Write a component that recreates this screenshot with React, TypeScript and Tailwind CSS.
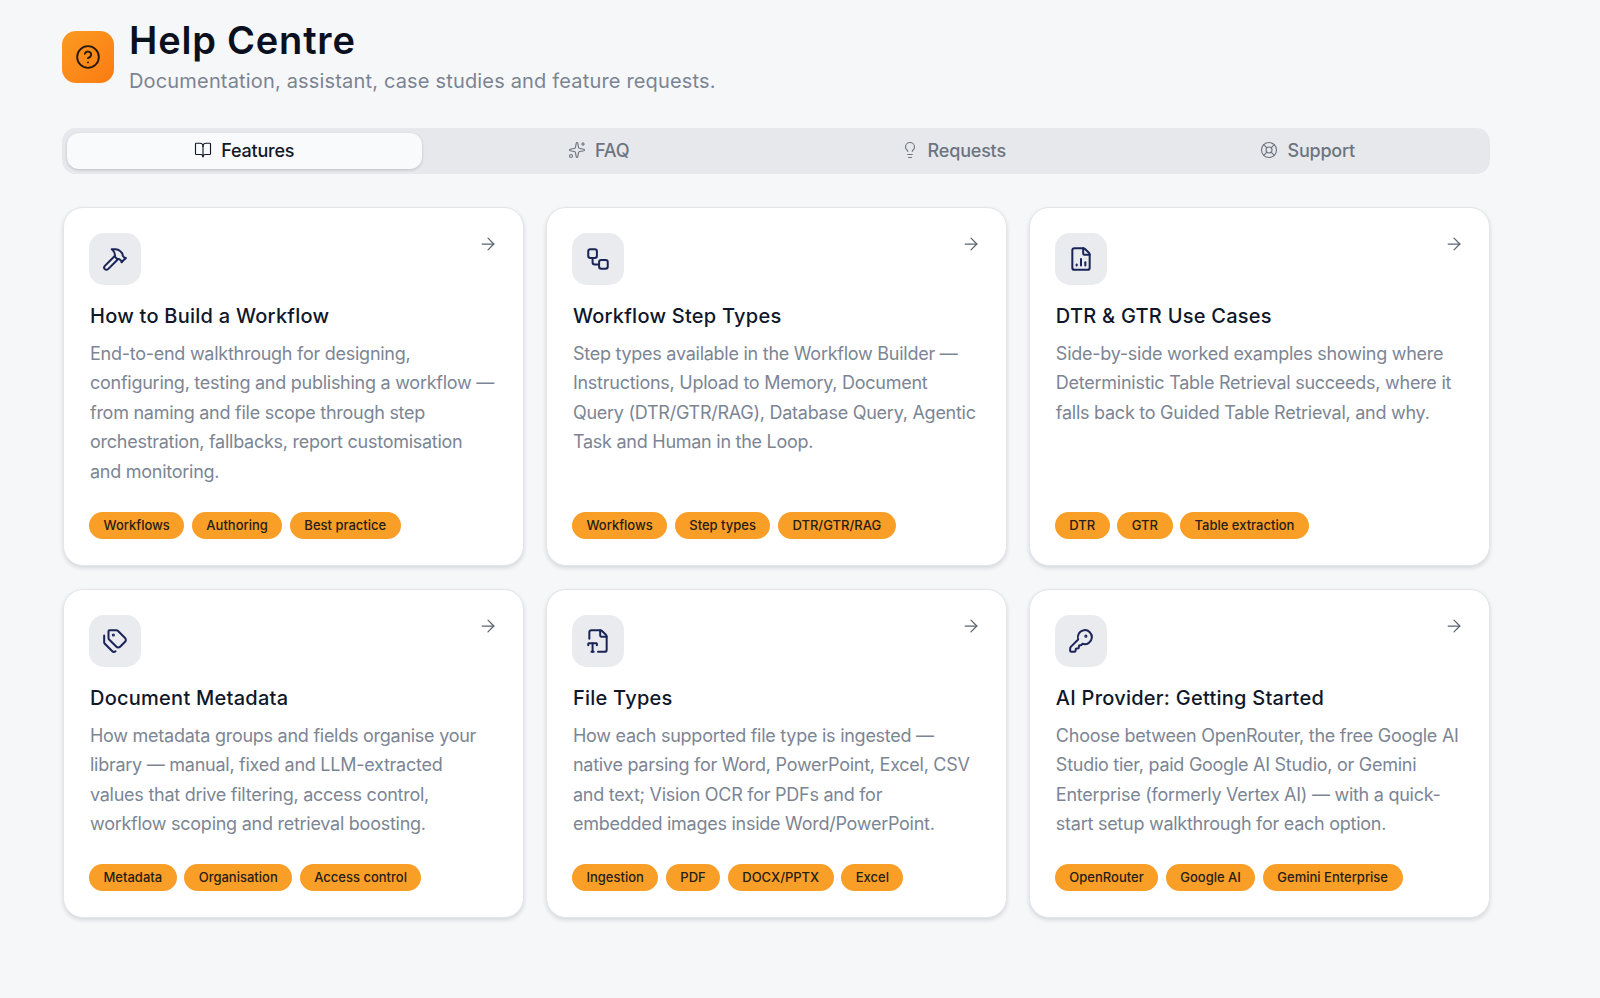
import { ArrowRight, BookOpen, CircleHelp, FileChartColumn, FileTypeCorner, Hammer, KeyRound, LifeBuoy, Lightbulb, Sparkles, Tags, Workflow, type LucideIcon } from 'lucide-react'

interface Article {
  icon: LucideIcon
  title: string
  lines: string[]
  tags: string[]
}

const tabs: { label: string; icon: LucideIcon; active?: boolean }[] = [
  { label: 'Features', icon: BookOpen, active: true },
  { label: 'FAQ', icon: Sparkles },
  { label: 'Requests', icon: Lightbulb },
  { label: 'Support', icon: LifeBuoy },
]

const topRow: Article[] = [
  {
    icon: Hammer,
    title: 'How to Build a Workflow',
    lines: [
      'End-to-end walkthrough for designing,',
      'configuring, testing and publishing a workflow —',
      'from naming and file scope through step',
      'orchestration, fallbacks, report customisation',
      'and monitoring.',
    ],
    tags: ['Workflows', 'Authoring', 'Best practice'],
  },
  {
    icon: Workflow,
    title: 'Workflow Step Types',
    lines: [
      'Step types available in the Workflow Builder —',
      'Instructions, Upload to Memory, Document',
      'Query (DTR/GTR/RAG), Database Query, Agentic',
      'Task and Human in the Loop.',
    ],
    tags: ['Workflows', 'Step types', 'DTR/GTR/RAG'],
  },
  {
    icon: FileChartColumn,
    title: 'DTR & GTR Use Cases',
    lines: [
      'Side-by-side worked examples showing where',
      'Deterministic Table Retrieval succeeds, where it',
      'falls back to Guided Table Retrieval, and why.',
    ],
    tags: ['DTR', 'GTR', 'Table extraction'],
  },
]

const bottomRow: Article[] = [
  {
    icon: Tags,
    title: 'Document Metadata',
    lines: [
      'How metadata groups and fields organise your',
      'library — manual, fixed and LLM-extracted',
      'values that drive filtering, access control,',
      'workflow scoping and retrieval boosting.',
    ],
    tags: ['Metadata', 'Organisation', 'Access control'],
  },
  {
    icon: FileTypeCorner,
    title: 'File Types',
    lines: [
      'How each supported file type is ingested —',
      'native parsing for Word, PowerPoint, Excel, CSV',
      'and text; Vision OCR for PDFs and for',
      'embedded images inside Word/PowerPoint.',
    ],
    tags: ['Ingestion', 'PDF', 'DOCX/PPTX', 'Excel'],
  },
  {
    icon: KeyRound,
    title: 'AI Provider: Getting Started',
    lines: [
      'Choose between OpenRouter, the free Google AI',
      'Studio tier, paid Google AI Studio, or Gemini',
      'Enterprise (formerly Vertex AI) — with a quick-',
      'start setup walkthrough for each option.',
    ],
    tags: ['OpenRouter', 'Google AI', 'Gemini Enterprise'],
  },
]

function ArticleCard({ article, height }: { article: Article; height: string }) {
  const Icon = article.icon
  return (
    <div className={`${height} flex flex-col rounded-[20px] border border-[#e3e5e9] bg-white px-[25px] pt-[25px] pb-[26px] shadow-[0_2px_4px_rgba(15,23,42,0.14)]`}>
      <div className="flex items-start justify-between">
        <div className="flex h-[52px] w-[52px] items-center justify-center rounded-[15px] bg-[#e9ebef]">
          <Icon size={26} strokeWidth={1.85} className="text-[#1b2457]" />
        </div>
        <ArrowRight size={20} strokeWidth={1.5} className="mt-[1px] text-[#5b6472]" />
      </div>
      <h3 className="mt-[16.5px] pl-[1px] text-[20px] leading-[28px] font-medium tracking-[0.25px] text-[#0f172a]">{article.title}</h3>
      <p className="mt-[9.5px] pl-[1px] text-[18px] leading-[29.4px] tracking-[-0.26px] whitespace-nowrap text-[#7c8594]">
        {article.lines.map(line => (
          <span key={line} className="block">{line}</span>
        ))}
      </p>
      <div className="mt-auto flex gap-[7.5px]">
        {article.tags.map(tag => (
          <span key={tag} className="flex h-[27px] items-center rounded-full bg-[#f99e27] px-[14.5px] text-[13px] font-medium text-[#262018]">
            {tag}
          </span>
        ))}
      </div>
    </div>
  )
}

export default function App() {
  return (
    <div className="min-h-[998px] bg-[#f6f7f9] pt-[17px] pl-[62px] font-['Inter','Liberation_Sans',sans-serif]">
      <div className="w-[1428px]">
        <div className="flex items-start gap-[15px]">
          <div className="mt-[14px] flex h-[52px] w-[52px] items-center justify-center rounded-[14px] bg-gradient-to-br from-[#fb9a22] to-[#fb7b10]">
            <CircleHelp size={26} strokeWidth={1.75} className="text-[#2a1a0c]" />
          </div>
          <div>
            <h1 className="text-[38px] leading-[46px] font-semibold tracking-[0.8px] text-[#0b1020]">Help Centre</h1>
            <p className="mt-[4px] text-[20px] leading-[28px] tracking-[0.17px] text-[#7b8492]">Documentation, assistant, case studies and feature requests.</p>
          </div>
        </div>

        <div className="mt-[33px] grid h-[46px] grid-cols-4 rounded-[14px] bg-[#e6e8eb] p-[5px]">
          {tabs.map(tab => {
            const Icon = tab.icon
            return (
              <div
                key={tab.label}
                className={
                  tab.active
                    ? 'flex items-center justify-center gap-[9px] rounded-[12px] bg-[#f9fafb] pb-[2px] text-[18px] font-medium tracking-[-0.2px] text-[#111827] shadow-[0_1px_3px_rgba(15,23,42,0.2)]'
                    : 'flex items-center justify-center gap-[9px] pb-[2px] text-[18px] font-medium tracking-[-0.2px] text-[#6d7480]'
                }
              >
                <Icon size={18} strokeWidth={1.5} />
                {tab.label}
              </div>
            )
          })}
        </div>

        <div className="mt-[33px] ml-[1px] grid w-[1427px] grid-cols-3 gap-x-[21.8px] gap-y-[23px]">
          {topRow.map(article => (
            <ArticleCard key={article.title} article={article} height="h-[359px]" />
          ))}
          {bottomRow.map(article => (
            <ArticleCard key={article.title} article={article} height="h-[329px]" />
          ))}
        </div>
      </div>
    </div>
  )
}
